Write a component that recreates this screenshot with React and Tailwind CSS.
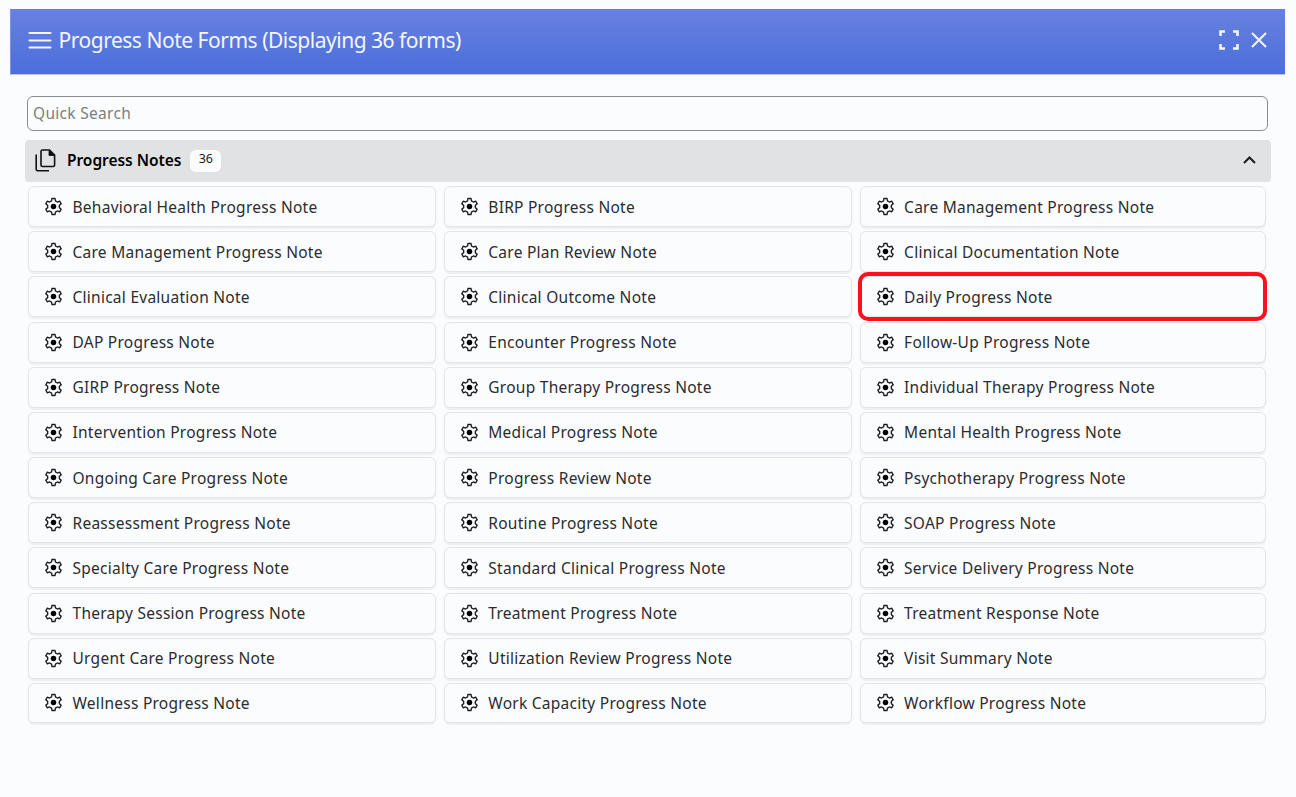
const NOTES = [
  "Behavioral Health Progress Note", "BIRP Progress Note", "Care Management Progress Note",
  "Care Management Progress Note", "Care Plan Review Note", "Clinical Documentation Note",
  "Clinical Evaluation Note", "Clinical Outcome Note", "Daily Progress Note",
  "DAP Progress Note", "Encounter Progress Note", "Follow-Up Progress Note",
  "GIRP Progress Note", "Group Therapy Progress Note", "Individual Therapy Progress Note",
  "Intervention Progress Note", "Medical Progress Note", "Mental Health Progress Note",
  "Ongoing Care Progress Note", "Progress Review Note", "Psychotherapy Progress Note",
  "Reassessment Progress Note", "Routine Progress Note", "SOAP Progress Note",
  "Specialty Care Progress Note", "Standard Clinical Progress Note", "Service Delivery Progress Note",
  "Therapy Session Progress Note", "Treatment Progress Note", "Treatment Response Note",
  "Urgent Care Progress Note", "Utilization Review Progress Note", "Visit Summary Note",
  "Wellness Progress Note", "Work Capacity Progress Note", "Workflow Progress Note",
];

const SELECTED = "Daily Progress Note";

// Six-toothed gear outline: each tooth is two outer points between two root points.
const polar = (r, deg) => {
  const a = ((deg - 90) * Math.PI) / 180;
  return `${(12 + r * Math.cos(a)).toFixed(2)} ${(12 + r * Math.sin(a)).toFixed(2)}`;
};
const GEAR_PATH =
  "M" +
  [0, 60, 120, 180, 240, 300]
    .flatMap((t) => [polar(7.5, t - 19), polar(10.3, t - 11), polar(10.3, t + 11), polar(7.5, t + 19)])
    .join("L") +
  "Z";

function Gear() {
  return (
    <svg className="size-[19px] shrink-0" viewBox="0 0 24 24" fill="none" stroke="#1b1c1e" strokeWidth="1.7" strokeLinejoin="round">
      <path d={GEAR_PATH} />
      <circle cx="12" cy="12" r="3.5" fill="#000" stroke="none" />
    </svg>
  );
}

function NoteCard({ name }) {
  return (
    <button className="relative flex h-[41px] items-center rounded-[6px] border border-[#e2e4e7] bg-[#fbfcfe] pl-[15px] text-left shadow-[0_2px_2px_rgba(0,0,0,0.06)] nth-last-[-n+3]:h-[40px]">
      <Gear />
      <span className="ml-[9.5px] whitespace-nowrap text-[15.5px] leading-5 tracking-[0.26px] text-[#2b2c2e]">{name}</span>
      {name === SELECTED && (
        <span className="absolute -top-[5px] -right-[2px] -bottom-[5px] -left-[3px] z-10 rounded-[10px] border-4 border-[#fd0f1b]" />
      )}
    </button>
  );
}

export default function App() {
  return (
    <main className="flex h-[797px] w-[1296px] flex-col bg-[#fbfcfe] pt-[9px] font-['Noto_Sans',sans-serif]">
      <header className="mr-[11px] ml-[10px] flex h-[66px] shrink-0 items-center border-b border-l border-b-[#b9c6f1] border-l-[#7d94e4] bg-linear-to-b from-[#6781e0] to-[#4b6edb] pr-[18px] pb-[3px] pl-[17px] text-[#f3f6fe]">
        <svg className="h-[18px] w-[24px]" viewBox="0 0 24 18" stroke="currentColor" strokeWidth="2.1" strokeLinecap="round">
          <path d="M1.5 2H22.5M1.5 9.5H22.5M1.5 16.5H22.5" />
        </svg>
        <h1 className="ml-[6.500px] text-[21px] leading-7 tracking-[-0.48px] whitespace-nowrap">Progress Note Forms (Displaying 36 forms)</h1>
        <svg className="ml-auto size-[20px]" viewBox="0 0 20 20" fill="none" stroke="currentColor" strokeWidth="2.5">
          <path d="M1.500 6V1.500H6M14 1.500H18.500V6M18.500 14V18.500H14M6 18.500H1.500V14" />
        </svg>
        <svg className="ml-[12px] size-[16px]" viewBox="0 0 16 16" stroke="currentColor" strokeWidth="2">
          <path d="M1 1L15 15M15 1L1 15" />
        </svg>
      </header>

      <input
        className="mt-[21px] mr-[28px] ml-[27px] h-[35px] shrink-0 rounded-[6px] border border-[#8b8c8f] bg-transparent pb-[2px] pl-[5px] text-[15.5px] tracking-[0.3px] placeholder:text-[#7c7d80]"
        placeholder="Quick Search"
      />

      <section className="mt-[9px] mr-[25px] ml-[25px] flex h-[42px] shrink-0 items-center rounded-[4px] bg-[#e1e2e4] pr-[15px] pl-[10px]">
        <svg className="mb-px h-[23px] w-[21px]" viewBox="0 0 21 23" fill="none" stroke="#111" strokeWidth="1.6">
          <path d="M7.500 1H14.500L19.600 6.200V16Q19.600 17.500 18.100 17.500H7.500Q6 17.500 6 16V2.500Q6 1 7.500 1Z" />
          <path d="M14 1.500V6.500H19.200Z" fill="#000" strokeWidth="0.8" />
          <path d="M1.200 5.500V20.200Q1.200 21.700 2.700 21.700H14" />
        </svg>
        <h2 className="mb-[2px] ml-[11px] text-[15.5px] leading-5 font-semibold tracking-[-0.04px] whitespace-nowrap text-black">Progress Notes</h2>
        <span className="ml-[9px] flex h-[22px] w-[31px] items-center justify-center rounded-[6px] bg-[#fbfcfe] pb-[3px] text-[12.5px] text-[#222]">36</span>
        <svg className="mb-[2px] ml-auto h-[8px] w-[13px]" viewBox="0 0 13 8" fill="none" stroke="#1c1c1c" strokeWidth="2">
          <path d="M1 7L6.500 1.500L12 7" />
        </svg>
      </section>

      <div className="mt-[4px] mr-[29px] ml-[28px] grid grid-cols-[407.8px_407.8px_406.4px] gap-x-[8px] gap-y-[4.18px]">
        {NOTES.map((name, i) => (
          <NoteCard key={i} name={name} />
        ))}
      </div>
    </main>
  );
}
